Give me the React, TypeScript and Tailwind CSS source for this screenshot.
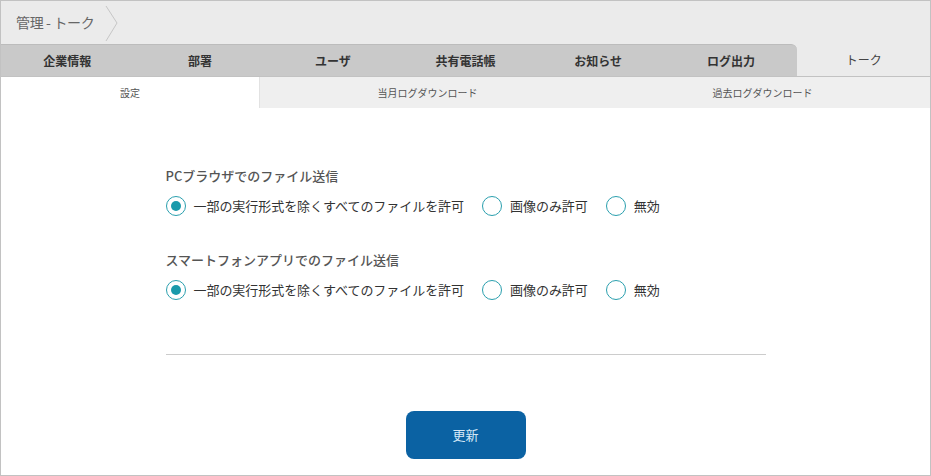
import { useState } from 'react';

const mainTabs = ['企業情報', '部署', 'ユーザ', '共有電話帳', 'お知らせ', 'ログ出力'];
const subTabs = [
  { label: '設定', w: 'w-[258px]' },
  { label: '当月ログダウンロード', w: 'flex-1' },
  { label: '過去ログダウンロード', w: 'flex-1' },
];
const options = ['一部の実行形式を除くすべてのファイルを許可', '画像のみ許可', '無効'];

function Radio({ checked, label, onClick }: { checked: boolean; label: string; onClick: () => void }) {
  return (
    <button type="button" onClick={onClick} className="flex items-center gap-[8px] mr-[18px]">
      <span className="w-[20px] h-[20px] rounded-full border-[1.5px] border-[#2a9fae] flex items-center justify-center">
        {checked && <span className="w-[10px] h-[10px] rounded-full bg-[#1a9aab]" />}
      </span>
      <span className="text-[13px] text-[#333] tracking-[-0.05px]">{label}</span>
    </button>
  );
}

function Setting({ title }: { title: string }) {
  const [value, setValue] = useState(0);
  return (
    <div className="flex flex-col">
      <h3 className="text-[13px] text-[#555] leading-[18px] font-medium">{title}</h3>
      <div className="flex items-center mt-[11px]">
        {options.map((o, i) => (
          <Radio key={o} label={o} checked={value === i} onClick={() => setValue(i)} />
        ))}
      </div>
    </div>
  );
}

export default function App() {
  return (
    <main className="w-[931px] h-[476px] border border-[#c2c2c2] bg-white overflow-hidden font-['Noto_Sans_CJK_JP',sans-serif]">
      {/* HEADER */}
      <div className="h-[43px] bg-[#ebebeb] flex items-center">
        <h1 className="pl-[15px] text-[14px] text-[#666] tracking-tight">管理 - トーク</h1>
        <svg width="16" height="40" viewBox="0 0 16 40" className="ml-[10px]">
          <path d="M2 3 L13 20 L2 38" fill="none" stroke="#c6c6c6" strokeWidth="1" />
        </svg>
      </div>

      {/* MAIN TABS */}
      <div className="flex h-[33px] bg-[#ebebeb] border-b border-[#c2c2c2]">
        <div className="flex flex-[6] bg-[#c9c9c9] border-t border-[#bcbcbc] rounded-tr-[6px]">
          {mainTabs.map((t) => (
            <div key={t} className="flex-1 flex items-center justify-center text-[12px] font-bold text-[#333]">
              {t}
            </div>
          ))}
        </div>
        <div className="flex-1 flex items-center justify-center text-[12px] text-[#444]">トーク</div>
      </div>

      {/* SUB TABS */}
      <div className="flex h-[31px] bg-[#efefef]">
        {subTabs.map((s, i) => (
          <div
            key={s.label}
            className={`${s.w} flex items-center justify-center text-[10px] text-[#555] ${i === 0 ? 'bg-white' : ''} ${i === 1 ? 'border-l border-[#e2e2e2]' : ''}`}
          >
            {s.label}
          </div>
        ))}
      </div>

      {/* CONTENT */}
      <div className="w-[600px] mx-auto pt-[59px] flex flex-col">
        <Setting title="PCブラウザでのファイル送信" />
        <div className="h-[35px]" />
        <Setting title="スマートフォンアプリでのファイル送信" />
        <div className="border-b border-[#cccccc] mt-[54px]" />
        <div className="flex justify-center mt-[56px]">
          <button type="button" className="w-[120px] h-[48px] rounded-[8px] bg-[#0b62a3] text-[13px] text-[#d6e8f7]">
            更新
          </button>
        </div>
      </div>
    </main>
  );
}
